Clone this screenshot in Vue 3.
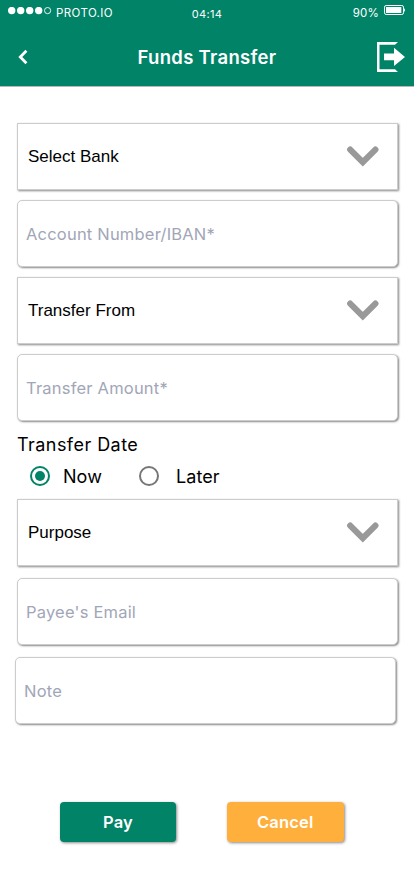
<script setup>
import { ref } from 'vue'

const when = ref('now')
const dates = [
  { id: 'now', label: 'Now' },
  { id: 'later', label: 'Later' },
]
const topFields = [
  { label: 'Select Bank', select: true },
  { label: 'Account Number/IBAN*' },
  { label: 'Transfer From', select: true },
  { label: 'Transfer Amount*' },
]
const bottomFields = [
  { label: 'Purpose', select: true },
  { label: "Payee's Email" },
  { label: 'Note', shifted: true },
]
</script>

<template>
  <div class="screen">
    <header class="header">
      <div class="status">
        <div class="carrier">
          <svg class="signal" width="44" height="8" viewBox="0 0 44 8">
            <circle v-for="n in 4" :key="n" :cx="n * 9 - 5.3" cy="3.6" r="3.7" fill="#fff" />
            <circle cx="39.6" cy="3.6" r="3.1" fill="none" stroke="#fff" stroke-width="0.9" />
          </svg>
          <span class="carrier-name">PROTO.IO</span>
        </div>
        <span class="clock">04:14</span>
        <div class="power">
          <span class="percent">90%</span>
          <svg class="battery" width="22" height="10" viewBox="0 0 22 10">
            <rect x="0.5" y="0.5" width="19" height="9" rx="1.7" fill="none" stroke="#fff" />
            <rect x="2" y="2" width="15.3" height="6" fill="#fff" />
            <path d="M20 3.2Q21 3.6 21 5T20 6.8Z" fill="#fff" />
          </svg>
        </div>
      </div>
      <div class="nav">
        <svg class="back" width="12" height="16" viewBox="0 0 12 16">
          <path d="M9.4 1.8L3.3 8L9.4 14.2" fill="none" stroke="#fff" stroke-width="2.8" />
        </svg>
        <h1 class="title">Funds Transfer</h1>
        <svg class="exit" width="28" height="30" viewBox="0 0 28 30">
          <path d="M0 0H21L18 2.7H2.5V27.3H18L21 30H0Z" fill="#fff" />
          <path d="M7 11.5H17V5.8L28 15L17 24V18.3H7Z" fill="#fff" />
        </svg>
      </div>
    </header>

    <main class="form">
      <div class="group">
        <div v-for="f in topFields" :key="f.label" class="field" :class="{ select: f.select }">
          <span class="text">{{ f.label }}</span>
          <svg v-if="f.select" class="chevron" width="33" height="22" viewBox="0 0 33 22">
            <path d="M4.2 3.6L16.8 16.2L29.4 3.6" fill="none" stroke="#999" stroke-width="6.2" stroke-linecap="round" />
          </svg>
        </div>
      </div>

      <div class="date-label">Transfer Date</div>
      <div class="radios">
        <div v-for="d in dates" :key="d.id" class="radio" :class="d.id" @click="when = d.id">
          <span class="ring" :class="{ on: when === d.id }"></span>
          <span>{{ d.label }}</span>
        </div>
      </div>

      <div class="group lower">
        <div
          v-for="f in bottomFields"
          :key="f.label"
          class="field"
          :class="{ select: f.select, shifted: f.shifted }"
        >
          <span class="text">{{ f.label }}</span>
          <svg v-if="f.select" class="chevron" width="33" height="22" viewBox="0 0 33 22">
            <path d="M4.2 3.6L16.8 16.2L29.4 3.6" fill="none" stroke="#999" stroke-width="6.2" stroke-linecap="round" />
          </svg>
        </div>
      </div>

      <div class="actions">
        <button class="btn pay">Pay</button>
        <button class="btn cancel">Cancel</button>
      </div>
    </main>
  </div>
</template>

<style>
body {
  background: #fff;
}
</style>

<style scoped>
.screen {
  width: 414px;
  height: 896px;
  overflow: hidden;
  background: #fff;
  font-family: Inter, "Liberation Sans", sans-serif;
  color: #000;
}
.header {
  box-sizing: border-box;
  height: 87px;
  background: #008367;
  border-bottom: 1px solid #b8b8b8;
  color: #fff;
}
.status {
  display: grid;
  grid-template-columns: 1fr auto 1fr;
  height: 27px;
  padding: 0 9px 0 8px;
  font-size: 11px;
  line-height: 14px;
}
.carrier,
.power {
  display: flex;
  align-items: flex-start;
}
.power {
  justify-content: flex-end;
}
.signal {
  margin-top: 7px;
}
.carrier-name {
  margin: 6px 0 0 4px;
  font-size: 11.5px;
  letter-spacing: 0.4px;
}
.clock {
  padding: 7px 0 0 1px;
  letter-spacing: 0.3px;
}
.percent {
  margin: 6px 5px 0 0;
  font-size: 11.5px;
  letter-spacing: 0.2px;
}
.battery {
  margin: 5px -1px 0 0;
}
.nav {
  display: grid;
  grid-template-columns: 28px 1fr 28px;
  align-items: center;
  height: 59px;
  padding: 0 9px 0 17px;
}
.title {
  margin: 0 0 0 -8px;
  text-align: center;
  font-size: 18.5px;
  line-height: 24px;
  font-weight: 600;
  letter-spacing: 0.3px;
}
.form {
  padding: 36px 16px 0 17px;
}
.group {
  display: flex;
  flex-direction: column;
  gap: 10px;
}
.lower {
  gap: 12px;
  margin-top: 12px;
}
.field {
  box-sizing: border-box;
  display: flex;
  align-items: center;
  justify-content: space-between;
  height: 67px;
  padding: 0 18px 0 8px;
  border: 1px solid #ccc;
  border-radius: 5px;
  box-shadow: 1px 1px 2px #888;
  background: #fff;
  color: #a1a6b7;
  font-size: 16.5px;
  letter-spacing: 0.2px;
}
.select {
  padding-left: 10px;
  border-radius: 0;
  color: #000;
  font-family: "Liberation Sans", Arial, sans-serif;
  font-size: 17px;
  letter-spacing: 0;
}
.shifted {
  margin: 0 2px 0 -2px;
}
.date-label {
  margin-top: 12px;
  font-size: 18px;
  line-height: 24px;
  letter-spacing: 0.45px;
}
.radios {
  display: flex;
  align-items: center;
  height: 22px;
  margin-top: 8px;
  padding-left: 13px;
  font-size: 18px;
  letter-spacing: 0.05px;
}
.radio {
  display: flex;
  align-items: center;
  gap: 13px;
  width: 109px;
}
.later {
  gap: 17px;
}
.ring {
  box-sizing: border-box;
  display: grid;
  place-items: center;
  width: 20px;
  height: 20px;
  border: 2px solid #777;
  border-radius: 50%;
}
.ring.on {
  border-color: #008367;
}
.ring.on::after {
  content: "";
  width: 10px;
  height: 10px;
  border-radius: 50%;
  background: #008367;
}
.actions {
  display: flex;
  gap: 51px;
  margin: 78px 0 0 43px;
}
.btn {
  width: 116px;
  height: 40px;
  padding: 0;
  border: 0;
  border-radius: 4px;
  box-shadow: 1px 1px 3px #888;
  color: #fff;
  font: 600 16.5px/40px Inter, "Liberation Sans", sans-serif;
  letter-spacing: 0.2px;
}
.pay {
  background: #008367;
}
.cancel {
  width: 116.5px;
  background: #ffaf3c;
}
</style>
